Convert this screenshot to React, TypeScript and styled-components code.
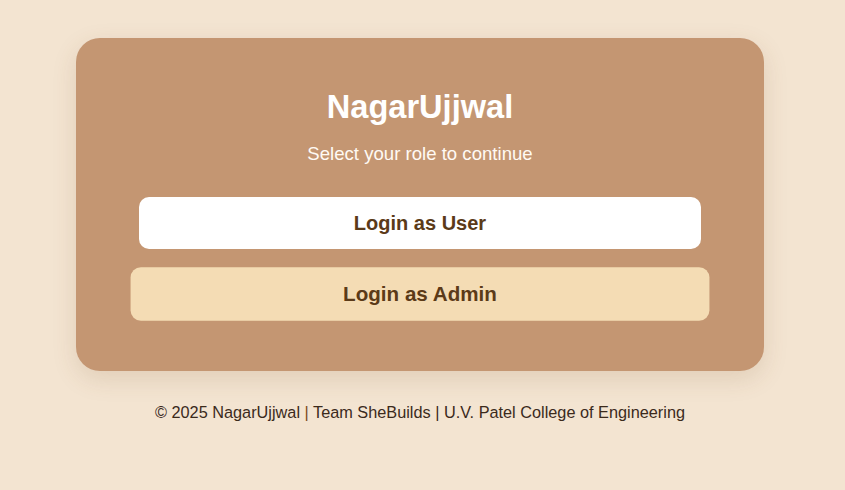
import React from "react";
import styled, { createGlobalStyle } from "styled-components";

const Global = createGlobalStyle`
  html, body { margin: 0; padding: 0; }
  body {
    background: #f3e4d1;
    font-family: "Liberation Sans", Arial, sans-serif;
  }
`;

const Page = styled.div`
  display: flex;
  flex-direction: column;
  align-items: center;
  padding: 38px 5px 0 0;
`;

const Card = styled.div`
  width: 688px;
  box-sizing: border-box;
  padding: 50px 63px 51px;
  background: #c49672;
  border-radius: 24px;
  box-shadow: 0 8px 24px rgba(120, 80, 40, 0.15);
  display: flex;
  flex-direction: column;
  align-items: stretch;
`;

const Title = styled.h1`
  margin: 0;
  font-size: 32.6px;
  line-height: 37px;
  font-weight: 700;
  color: #ffffff;
  text-align: center;
`;

const Subtitle = styled.p`
  margin: 18px 0 0;
  font-size: 18.6px;
  line-height: 21px;
  color: #fffaf4;
  text-align: center;
`;

const Buttons = styled.div`
  margin-top: 33px;
  display: flex;
  flex-direction: column;
  gap: 19px;
`;

const RoleButton = styled.button<{ $variant: "user" | "admin"; $active?: boolean }>`
  height: 52px;
  border: none;
  border-radius: 10px;
  font-family: "Liberation Sans", Arial, sans-serif;
  font-size: 20px;
  font-weight: 700;
  color: #5b3a18;
  background: ${(p) => (p.$variant === "user" ? "#ffffff" : "#f4dcb4")};
  transform: ${(p) => (p.$active ? "scale(1.03)" : "none")};
  cursor: pointer;
`;

const Footer = styled.footer`
  margin-top: 32px;
  font-size: 16.3px;
  line-height: 18px;
  color: #3b2a1c;
  text-align: center;
`;

const Sep = styled.span`
  color: #7a4a20;
`;

export default function App() {
  return (
    <>
      <Global />
      <Page>
        <Card>
          <Title>NagarUjjwal</Title>
          <Subtitle>Select your role to continue</Subtitle>
          <Buttons>
            <RoleButton $variant="user">Login as User</RoleButton>
            <RoleButton $variant="admin" $active>
              Login as Admin
            </RoleButton>
          </Buttons>
        </Card>
        <Footer>
          © 2025 NagarUjjwal <Sep>|</Sep> Team SheBuilds | U.V. Patel College of Engineering
        </Footer>
      </Page>
    </>
  );
}
